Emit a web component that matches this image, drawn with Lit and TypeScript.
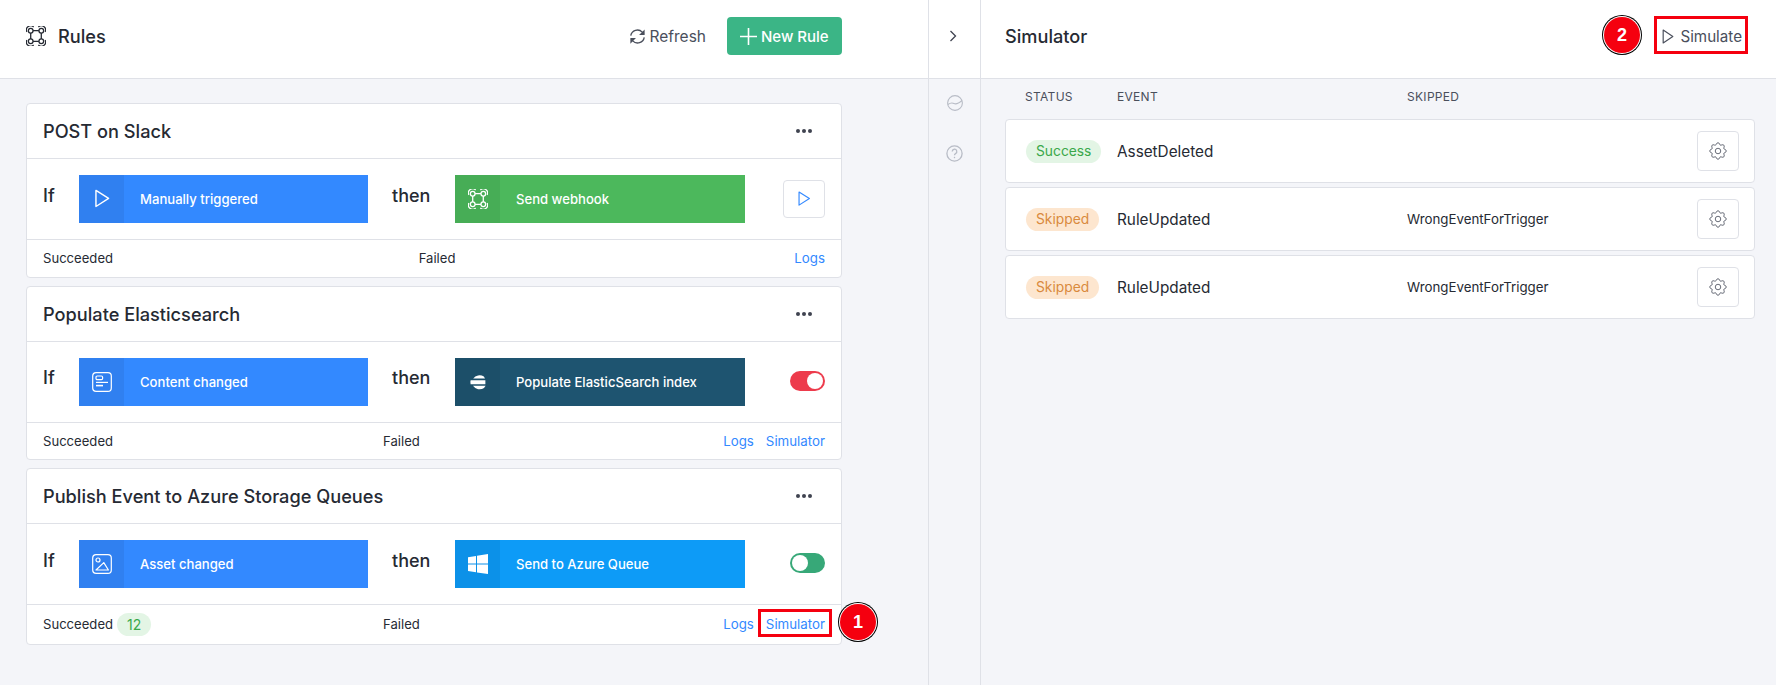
import { LitElement, html, css, svg } from 'lit';
import { customElement } from 'lit/decorators.js';

const ruleIcon = svg`
  <g transform="translate(-1.76 -1.76) scale(1.176)" fill="none" stroke="currentColor" stroke-width="1.1">
    <circle cx="5.5" cy="5.5" r="2" /><circle cx="14.5" cy="5.5" r="2" />
    <circle cx="5.5" cy="14.5" r="2" /><circle cx="14.5" cy="14.5" r="2" />
    <path d="M7.5 5.5h5M5.5 7.5v5M7.5 14.5h5M14.5 7.5v5" />
    <path d="M2.2 6.5A3.6 3.6 0 0 1 8 2.4M12 2.4a3.6 3.6 0 0 1 5.8 4.1M2.2 13.5A3.6 3.6 0 0 0 8 17.6M12 17.6a3.6 3.6 0 0 0 5.8-4.1" />
  </g>`;

const playIcon = svg`<path d="M4.5 2.2 16 9.5 4.5 16.8z" fill="none" stroke="currentColor" stroke-width="1.3" stroke-linejoin="round" />`;

const contentIcon = svg`
  <g fill="none" stroke="currentColor" stroke-width="1.2">
    <rect x="0.7" y="0.7" width="18.6" height="18.6" rx="3.4" />
    <rect x="4" y="4" width="6.6" height="3.6" rx="1.2" />
    <path d="M4 10.4h12" />
    <path d="M4 13.6h7" stroke-width="1.6" />
  </g>`;

const assetIcon = svg`
  <g fill="none" stroke="currentColor" stroke-width="1.2">
    <rect x="0.7" y="0.7" width="18.6" height="18.6" rx="3.4" />
    <circle cx="6" cy="6" r="2" />
    <path d="M4 16h12.4l-4.6-7.4z" stroke-linejoin="round" />
  </g>`;

const elasticIcon = svg`
  <g transform="translate(2 2)" fill="currentColor">
    <path d="M3.2 4.6A8 8 0 0 1 13.8 2.4L15 4.6z" />
    <path d="M0.6 6.2H15.4V10.2H0.6A8 8 0 0 1 0.6 6.2z" />
    <path d="M3 11.8H15.6L14 14a8 8 0 0 1-11-2.2z" />
  </g>`;

const windowsIcon = svg`<path fill="currentColor" d="M0 3.2 8 2v7.6H0zM9 1.8 20 0v9.6H9zM0 10.6h8v7.6L0 17zM9 10.6h11V20L9 18.4z" />`;

const rules = [
  {
    name: 'POST on Slack',
    trigger: 'Manually triggered',
    triggerIcon: playIcon,
    triggerSize: 22,
    action: 'Send webhook',
    actionIcon: ruleIcon,
    actionClass: 'green',
    control: 'play',
    simulator: false,
    count: '',
  },
  {
    name: 'Populate Elasticsearch',
    trigger: 'Content changed',
    triggerIcon: contentIcon,
    triggerSize: 20,
    action: 'Populate ElasticSearch index',
    actionIcon: elasticIcon,
    actionClass: 'elastic',
    control: 'on',
    simulator: true,
    count: '',
  },
  {
    name: 'Publish Event to Azure Storage Queues',
    trigger: 'Asset changed',
    triggerIcon: assetIcon,
    triggerSize: 20,
    action: 'Send to Azure Queue',
    actionIcon: windowsIcon,
    actionClass: 'azure',
    control: 'off',
    simulator: true,
    count: '12',
  },
];

const events = [
  { status: 'Success', event: 'AssetDeleted', skipped: '' },
  { status: 'Skipped', event: 'RuleUpdated', skipped: 'WrongEventForTrigger' },
  { status: 'Skipped', event: 'RuleUpdated', skipped: 'WrongEventForTrigger' },
];

@customElement('app-root')
export class AppRoot extends LitElement {
  static styles = css`
    :host {
      display: flex;
      position: relative;
      width: 1776px;
      height: 685px;
      overflow: hidden;
      background: #f4f5f9;
      color: #262a33;
      font-family: Inter, 'Liberation Sans', sans-serif;
      font-size: 14px;
    }
    svg {
      display: block;
      flex-shrink: 0;
    }
    .header {
      display: flex;
      align-items: center;
      height: 71px;
      padding-bottom: 7px;
      background: #fff;
      border-bottom: 1px solid #dfe1e7;
      box-sizing: content-box;
    }
    h1 {
      margin: 0;
      font-size: 18.2px;
      font-weight: 500;
    }

    .rules-pane {
      width: 928px;
      border-right: 1px solid #dfe1e7;
    }
    .rules-pane .header {
      padding-left: 26px;
      padding-right: 86px;
    }
    .rules-pane h1 {
      margin-left: 12px;
      flex: 1;
    }
    .refresh {
      display: flex;
      align-items: center;
      gap: 3px;
      margin: 1px 21px 0 0;
      color: #4a4f5c;
      font-size: 15.5px;
    }
    .new-rule {
      display: flex;
      align-items: center;
      gap: 4px;
      width: 115px;
      height: 38px;
      margin-top: 1px;
      padding-left: 13px;
      box-sizing: border-box;
      border-radius: 4px;
      background: #3bb586;
      color: #fff;
      font-size: 15px;
      font-weight: 500;
    }
    .cards {
      display: flex;
      flex-direction: column;
      gap: 8px;
      padding: 24px 86px 0 26px;
    }
    .card {
      background: #fff;
      border: 1px solid #dfe1e7;
      border-radius: 4px;
    }
    .card-title {
      display: flex;
      align-items: center;
      justify-content: space-between;
      height: 54px;
      padding: 0 28px 0 16px;
      border-bottom: 1px solid #dfe1e7;
      font-size: 18.2px;
      font-weight: 500;
    }
    .dots {
      color: #3f4350;
    }
    .card-body {
      display: grid;
      grid-template-columns: 36px 289px 87px 290px 1fr;
      align-items: center;
      height: 80px;
      padding: 0 16px;
      border-bottom: 1px solid #dfe1e7;
    }
    .word {
      padding-bottom: 8px;
      font-size: 18px;
      font-weight: 500;
    }
    .word.then {
      padding-left: 24px;
    }
    .block {
      display: flex;
      align-items: center;
      height: 48px;
      background: #3389ff;
      color: #fff;
      font-size: 13.1px;
      font-weight: 500;
    }
    .block-icon {
      display: flex;
      align-items: center;
      justify-content: center;
      width: 45px;
      height: 100%;
      margin-right: 16px;
      background: rgba(0, 0, 0, 0.06);
    }
    .block.green {
      background: #4cb85c;
    }
    .block.elastic {
      background: #1e5470;
    }
    .block.azure {
      background: #0d9bf7;
    }
    .control {
      justify-self: end;
    }
    .play-button {
      display: flex;
      align-items: center;
      justify-content: center;
      width: 42px;
      height: 38px;
      box-sizing: border-box;
      border: 1px solid #dfe1e7;
      border-radius: 4px;
      color: #3389ff;
    }
    .toggle {
      display: flex;
      width: 35px;
      height: 20px;
      margin-bottom: 2px;
      padding: 2px;
      box-sizing: border-box;
      border-radius: 10px;
    }
    .toggle span {
      width: 16px;
      height: 16px;
      border-radius: 50%;
      background: #fff;
    }
    .toggle.on {
      justify-content: flex-end;
      background: #ed3b4c;
    }
    .toggle.off {
      background: #37a878;
    }
    .card-footer {
      display: flex;
      align-items: center;
      padding: 8px 16px;
      line-height: 20.5px;
      font-size: 13.1px;
    }
    .stat {
      display: flex;
      align-items: center;
      flex: 1;
    }
    .count {
      margin-left: 4px;
      padding: 0 10px;
      height: 23px;
      line-height: 23px;
      border-radius: 12px;
      background: #e3f5e5;
      color: #3aa84a;
      font-size: 14px;
    }
    .links {
      display: flex;
      gap: 12px;
      color: #3389ff;
      font-size: 13.3px;
    }

    .sidebar {
      width: 51px;
      border-right: 1px solid #dfe1e7;
    }
    .sidebar .header {
      justify-content: center;
      color: #3f4350;
    }
    .sidebar .chevron {
      margin-left: -3px;
    }
    .side-icons {
      display: flex;
      flex-direction: column;
      align-items: center;
      gap: 34px;
      padding-top: 16px;
      color: #b8bcc6;
    }

    .sim-pane {
      flex: 1;
    }
    .sim-pane .header {
      justify-content: space-between;
      padding-left: 24px;
      padding-right: 34px;
    }
    .simulate {
      display: flex;
      align-items: center;
      gap: 6px;
      margin-top: 1px;
      color: #4a4f5c;
      font-size: 15.2px;
    }
    .sim-body {
      padding: 0 21px 0 24px;
    }
    .table-head {
      display: grid;
      grid-template-columns: 92px 290px 1fr;
      height: 34px;
      padding: 0 0 6px 20px;
      align-items: center;
      font-size: 12px;
      letter-spacing: 0.3px;
      color: #4a4f5c;
    }
    .sim-rows {
      display: flex;
      flex-direction: column;
      gap: 4px;
    }
    .sim-row {
      display: grid;
      grid-template-columns: 91px 290px 1fr 42px;
      align-items: center;
      height: 64px;
      padding: 0 15px 0 20px;
      box-sizing: border-box;
      background: #fff;
      border: 1px solid #dfe1e7;
      border-radius: 4px;
    }
    .status {
      justify-self: start;
      height: 23px;
      line-height: 23px;
      padding: 0 10px;
      border-radius: 12px;
      font-size: 13.8px;
    }
    .status.success {
      background: #e3f5e5;
      color: #3aa84a;
    }
    .status.skipped {
      background: #fde6cf;
      color: #d98a3d;
    }
    .event-name {
      font-size: 15.3px;
    }
    .skip-reason {
      font-size: 13.3px;
    }
    .gear-button {
      display: flex;
      align-items: center;
      justify-content: center;
      height: 38px;
      border: 1px solid #dfe1e7;
      border-radius: 4px;
      color: #5c606c;
    }

    /* callouts painted over the screenshot */
    .mark-box {
      position: absolute;
      box-sizing: border-box;
      border: 3px solid #f5000f;
    }
    .mark-box.one {
      left: 758px;
      top: 609px;
      width: 74px;
      height: 28px;
    }
    .mark-box.two {
      left: 1654px;
      top: 16px;
      width: 94px;
      height: 38px;
    }
    .mark-num {
      position: absolute;
      display: flex;
      align-items: center;
      justify-content: center;
      width: 36px;
      height: 36px;
      border-radius: 50%;
      background: #f5000f;
      box-shadow: 0 0 0 1px #fff, 0 0 0 2px #000;
      color: #fff;
      font-family: 'Liberation Sans', sans-serif;
      font-size: 18px;
      font-weight: 700;
    }
    .mark-num.one {
      left: 840px;
      top: 604px;
    }
    .mark-num.two {
      left: 1604px;
      top: 17px;
    }
  `;

  renderIcon(content: unknown, size: number) {
    return html`<svg width=${size} height=${size} viewBox="0 0 20 20">${content}</svg>`;
  }

  renderRule(rule: (typeof rules)[number]) {
    return html`
      <div class="card">
        <div class="card-title">
          <span>${rule.name}</span>
          <svg class="dots" width="18" height="6" viewBox="0 0 18 6" fill="currentColor">
            <circle cx="3" cy="3" r="2" /><circle cx="9" cy="3" r="2" /><circle cx="15" cy="3" r="2" />
          </svg>
        </div>
        <div class="card-body">
          <span class="word">If</span>
          <div class="block">
            <div class="block-icon">${this.renderIcon(rule.triggerIcon, rule.triggerSize)}</div>
            ${rule.trigger}
          </div>
          <span class="word then">then</span>
          <div class="block ${rule.actionClass}">
            <div class="block-icon">${this.renderIcon(rule.actionIcon, 20)}</div>
            ${rule.action}
          </div>
          <div class="control">
            ${rule.control === 'play'
              ? html`<div class="play-button">${this.renderIcon(playIcon, 18)}</div>`
              : html`<div class="toggle ${rule.control}"><span></span></div>`}
          </div>
        </div>
        <div class="card-footer">
          <div class="stat">Succeeded${rule.count ? html`<span class="count">${rule.count}</span>` : ''}</div>
          <div class="stat">Failed</div>
          <div class="links">
            <span>Logs</span>
            ${rule.simulator ? html`<span>Simulator</span>` : ''}
          </div>
        </div>
      </div>
    `;
  }

  renderEvent(row: (typeof events)[number]) {
    return html`
      <div class="sim-row">
        <span class="status ${row.status.toLowerCase()}">${row.status}</span>
        <span class="event-name">${row.event}</span>
        <span class="skip-reason">${row.skipped}</span>
        <div class="gear-button">
          <svg width="22" height="22" viewBox="0 0 24 24" fill="none" stroke="currentColor" stroke-width="1">
            <path d="M10.325 4.317c.426-1.756 2.924-1.756 3.35 0a1.724 1.724 0 002.573 1.066c1.543-.94 3.31.826 2.37 2.37a1.724 1.724 0 001.065 2.572c1.756.426 1.756 2.924 0 3.35a1.724 1.724 0 00-1.066 2.573c.94 1.543-.826 3.31-2.37 2.37a1.724 1.724 0 00-2.572 1.065c-.426 1.756-2.924 1.756-3.35 0a1.724 1.724 0 00-2.573-1.066c-1.543.94-3.31-.826-2.37-2.37a1.724 1.724 0 00-1.065-2.572c-1.756-.426-1.756-2.924 0-3.35a1.724 1.724 0 001.066-2.573c-.94-1.543.826-3.31 2.37-2.37.996.608 2.296.07 2.572-1.065z" />
            <circle cx="12" cy="12" r="3" />
          </svg>
        </div>
      </div>
    `;
  }

  render() {
    return html`
      <section class="rules-pane">
        <div class="header">
          ${this.renderIcon(ruleIcon, 20)}
          <h1>Rules</h1>
          <div class="refresh">
            <svg width="19" height="19" viewBox="0 0 24 24" fill="none" stroke="currentColor" stroke-width="1.7">
              <path d="M3.5 11A8.5 8.5 0 0 1 18 6.5L20 8.5" />
              <path d="M21 3v7h-7z" fill="currentColor" stroke="none" />
              <path d="M20.5 13A8.5 8.5 0 0 1 6 17.5L4 15.5" />
              <path d="M3 21v-7h7z" fill="currentColor" stroke="none" />
            </svg>
            Refresh
          </div>
          <div class="new-rule">
            <svg width="17" height="17" viewBox="0 0 17 17" stroke="currentColor" stroke-width="1.6"><path d="M8.5 0v17M0 8.5h17" /></svg>
            New Rule
          </div>
        </div>
        <div class="cards">${rules.map((r) => this.renderRule(r))}</div>
      </section>

      <nav class="sidebar">
        <div class="header">
          <svg class="chevron" width="14" height="14" viewBox="0 0 14 14" fill="none" stroke="currentColor" stroke-width="1.3"><path d="M4.5 2l5 5-5 5" /></svg>
        </div>
        <div class="side-icons">
          <svg width="16" height="16" viewBox="0 0 16 16" fill="none" stroke="currentColor" stroke-width="1.1">
            <circle cx="8" cy="8" r="7.4" /><path d="M0.8 9.5C3 8 5 7.5 7 8.5s4.5 0 8-3" />
          </svg>
          <svg width="17" height="17" viewBox="0 0 17 17" fill="none" stroke="currentColor" stroke-width="1.3">
            <circle cx="8.5" cy="8.5" r="7.6" /><path d="M6.2 6.5a2.3 2.3 0 1 1 3.3 2.1c-.7.4-1 .8-1 1.6" /><path d="M8.5 11.8v1.4" />
          </svg>
        </div>
      </nav>

      <section class="sim-pane">
        <div class="header">
          <h1>Simulator</h1>
          <div class="simulate">
            <svg width="12" height="15" viewBox="0 0 11 14" fill="none" stroke="currentColor" stroke-width="1.1"><path d="M1 1l9 6-9 6z" stroke-linejoin="round" /></svg>
            Simulate
          </div>
        </div>
        <div class="sim-body">
          <div class="table-head">
            <span>STATUS</span>
            <span>EVENT</span>
            <span>SKIPPED</span>
          </div>
          <div class="sim-rows">${events.map((e) => this.renderEvent(e))}</div>
        </div>
      </section>

      <div class="mark-box one"></div>
      <div class="mark-num one">1</div>
      <div class="mark-box two"></div>
      <div class="mark-num two">2</div>
    `;
  }
}
